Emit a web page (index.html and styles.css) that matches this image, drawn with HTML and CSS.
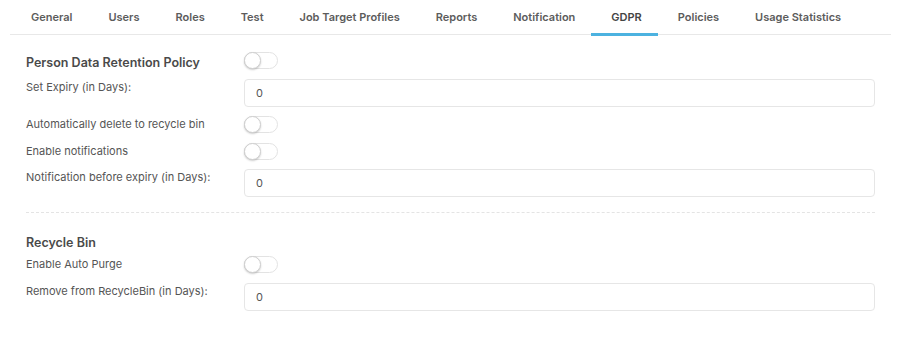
FILE: index.html
```html
<!DOCTYPE html>
<html lang="en">
<head>
  <meta charset="UTF-8">
  <title>Settings - GDPR</title>
  <link rel="stylesheet" href="styles.css">
</head>
<body>
  <div class="settings">
    <!-- tabs -->
    <nav class="tabs">
      <a class="tab">General</a>
      <a class="tab">Users</a>
      <a class="tab">Roles</a>
      <a class="tab">Test</a>
      <a class="tab">Job Target Profiles</a>
      <a class="tab">Reports</a>
      <a class="tab">Notification</a>
      <a class="tab active">GDPR</a>
      <a class="tab">Policies</a>
      <a class="tab">Usage Statistics</a>
    </nav>

    <div class="panel">
      <!-- Person data retention -->
      <div class="row">
        <h3 class="section-title">Person Data Retention Policy</h3>
        <div><span class="switch"><span class="knob"></span></span></div>
      </div>
      <div class="row">
        <label class="label">Set Expiry (in Days):</label>
        <input class="field" type="text" value="0">
      </div>
      <div class="row">
        <label class="label">Automatically delete to recycle bin</label>
        <div><span class="switch"><span class="knob"></span></span></div>
      </div>
      <div class="row">
        <label class="label">Enable notifications</label>
        <div><span class="switch"><span class="knob"></span></span></div>
      </div>
      <div class="row">
        <label class="label">Notification before expiry (in Days):</label>
        <input class="field" type="text" value="0">
      </div>

      <hr class="divider">

      <!-- Recycle bin -->
      <div class="row title-only">
        <h3 class="section-title">Recycle Bin</h3>
      </div>
      <div class="row">
        <label class="label">Enable Auto Purge</label>
        <div><span class="switch"><span class="knob"></span></span></div>
      </div>
      <div class="row">
        <label class="label">Remove from RecycleBin (in Days):</label>
        <input class="field" type="text" value="0">
      </div>
    </div>
  </div>
</body>
</html>
```

FILE: styles.css
```css
* {
  box-sizing: border-box;
}

html, body {
  margin: 0;
  padding: 0;
  background: #fff;
  font-family: "Inter", "Liberation Sans", sans-serif;
  color: #555;
}

.settings {
  margin: 0 13px 0 10px;
}

.tabs {
  display: flex;
  height: 35px;
  padding-left: 3px;
  border-bottom: 1px solid #e8e8e8;
}

.tab {
  position: relative;
  display: block;
  padding: 0 18px;
  line-height: 34px;
  font-size: 11px;
  font-weight: 600;
  color: #5c5c5c;
  white-space: nowrap;
  cursor: pointer;
}

.tab.active {
  color: #444;
}

.tab.active::after {
  content: "";
  position: absolute;
  left: -2px;
  right: 2px;
  bottom: -2px;
  height: 3px;
  background: #4cb2e0;
}

.panel {
  padding: 17px 16px 0;
}

.row {
  display: grid;
  grid-template-columns: 218px 1fr;
  align-items: start;
  margin-bottom: 9.5px;
}

.row.title-only {
  margin-bottom: 7px;
}

.section-title {
  margin: 0;
  font-size: 12.5px;
  font-weight: 600;
  line-height: 17px;
  color: #4a4a4a;
  transform: translateY(1.5px);
}

.label {
  font-size: 11px;
  line-height: 17px;
  color: #555;
}

.field {
  display: block;
  width: 100%;
  height: 28px;
  padding: 0 11px;
  border: 1px solid #e6e6e6;
  border-radius: 4px;
  font-family: inherit;
  font-size: 11px;
  color: #555;
  background: #fff;
  outline: none;
}

.switch {
  display: block;
  position: relative;
  width: 34px;
  height: 17px;
  border: 1px solid #e3e3e3;
  border-radius: 9px;
  background: #fff;
}

.knob {
  position: absolute;
  left: -1px;
  top: -1px;
  width: 17px;
  height: 17px;
  border-radius: 50%;
  background: #fff;
  border: 1px solid #cfcfcf;
  box-shadow: 0 1px 2px rgba(0, 0, 0, 0.2);
}

.divider {
  margin: 15px 0 19px;
  border: 0;
  border-top: 1px dashed #e4e4e4;
}
```
